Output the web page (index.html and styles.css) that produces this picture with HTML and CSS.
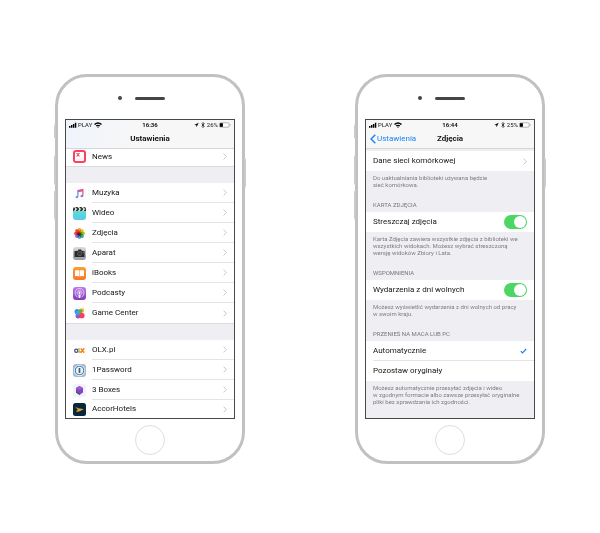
FILE: index.html
```html
<!DOCTYPE html>
<html lang="pl">
<head>
<meta charset="utf-8">
<meta name="viewport" content="width=device-width, initial-scale=1">
<title>Ustawienia</title>
<link rel="stylesheet" href="styles.css">
</head>
<body>
<svg class="defs" aria-hidden="true">
  <symbol id="signal" viewBox="0 0 9 6"><path d="M0 4h1.6v2H0zM2.2 3h1.6v3H2.2zM4.4 1.8H6V6H4.4zM6.6.5h1.6V6H6.6z"/></symbol>
  <symbol id="wifi" viewBox="0 0 8 6"><path d="M0 1.9Q4-1.5 8 1.9L7 3Q4 .6 1 3zM1.7 3.6Q4 1.7 6.3 3.6L5.3 4.6Q4 3.6 2.7 4.6zM3.2 5Q4 4.4 4.8 5L4 5.9z"/></symbol>
  <symbol id="location" viewBox="0 0 6 6"><path d="M.3 3.1 5.6.4 3 5.7 2.8 3.2z"/></symbol>
  <symbol id="bluetooth" viewBox="0 0 4 6"><path d="M.6 1.6 3.3 4.2 2 5.5V.5l1.3 1.3L.6 4.4" fill="none" stroke="currentColor" stroke-width=".7"/></symbol>
  <symbol id="battery" viewBox="0 0 12 6"><rect x=".5" y=".8" width="9.6" height="4.4" rx="1" fill="#fff" stroke="#888" stroke-width=".6"/><path d="M.9 1.2h3v3.6h-3z"/><path d="M10.8 2.2v1.6q.8-.2.8-.8t-.8-.8z" fill="#888"/></symbol>
  <symbol id="chevron" viewBox="0 0 4 7"><path d="M.6.6 3.4 3.5.6 6.4" fill="none" stroke="#c3c3c7" stroke-width=".9"/></symbol>
</svg>
<main class="stage">
  <section class="phone">
    <i class="key mute"></i><i class="key up"></i><i class="key down"></i><i class="key power"></i>
    <div class="earpiece"><i class="camera"></i><i class="speaker"></i></div>
    <div class="screen">
      <header class="bar tinted">
        <div class="status">
          <span class="carrier"><svg class="signal"><use href="#signal"/></svg>PLAY <svg class="wifi"><use href="#wifi"/></svg></span>
          <time>16:36</time>
          <span class="power-info"><svg class="location"><use href="#location"/></svg><svg class="bluetooth"><use href="#bluetooth"/></svg>26%<svg class="battery"><use href="#battery"/></svg></span>
        </div>
        <div class="title-row"><h1>Ustawienia</h1></div>
      </header>
      <nav class="list">
        <a class="item clipped" href="#"><svg class="app" viewBox="0 0 26 26"><rect width="26" height="26" rx="6" fill="#fa4263"/><rect x="4" y="4" width="18" height="18" rx="2" fill="#fff"/><path d="M6 6h2.500l5.500 7h-2.500zM11.500 6H14l-5.500 7H6z" fill="#f33c5c"/><path d="M15 16h5M7 18h12" stroke="#eed9df"/></svg><span class="name">News<svg class="chevron"><use href="#chevron"/></svg></span></a>
      </nav>
      <nav class="list spaced">
        <a class="item" href="#"><svg class="app" viewBox="0 0 26 26"><defs><linearGradient id="note" x1="0" y1="1" x2="1" y2="0"><stop stop-color="#44bdf4"/><stop offset=".45" stop-color="#9b70dd"/><stop offset="1" stop-color="#fc4a69"/></linearGradient></defs><rect x=".5" y=".5" width="25" height="25" rx="6" fill="#fff" stroke="#f2f2f4"/><path d="M8.500 6 21 3.500V17q0 3.500-3.500 3.500-2.700 0-2.700-2.200 0-2.300 3.700-2.900V9L11 10.500v8.700q0 3.300-3.500 3.300-2.700 0-2.700-2.200t3.700-2.900z" fill="url(#note)"/></svg><span class="name">Muzyka<svg class="chevron"><use href="#chevron"/></svg></span></a>
        <a class="item" href="#"><svg class="app" viewBox="0 0 26 26"><defs><linearGradient id="film" x1="0" y1="0" x2="0" y2="1"><stop stop-color="#5be0c7"/><stop offset="1" stop-color="#5ac5f4"/></linearGradient></defs><path d="M0 8h26v12q0 6-6 6H6q-6 0-6-6z" fill="url(#film)"/><path d="M0 8V4q0-4 4-4h18q4 0 4 4v4z" fill="#333"/><path d="m4 0 4 4-3 4H2l3-4-3-4zm8 0 4 4-3 4h-3l3-4-4-4zm8 0 4 4-3 4h-3l3-4-4-4z" fill="#fff"/></svg><span class="name">Wideo<svg class="chevron"><use href="#chevron"/></svg></span></a>
        <a class="item" href="#"><svg class="app" viewBox="0 0 26 26"><rect x=".5" y=".5" width="25" height="25" rx="6" fill="#fff" stroke="#f2f2f4"/><g class="petals"><rect x="9.500" y="2" width="7" height="11" rx="3.500" fill="#f9a12a"/><rect x="9.500" y="2" width="7" height="11" rx="3.500" fill="#e8cf25" transform="rotate(45 13 13)"/><rect x="9.500" y="2" width="7" height="11" rx="3.500" fill="#98c93c" transform="rotate(90 13 13)"/><rect x="9.500" y="2" width="7" height="11" rx="3.500" fill="#41b07a" transform="rotate(135 13 13)"/><rect x="9.500" y="2" width="7" height="11" rx="3.500" fill="#659bd5" transform="rotate(180 13 13)"/><rect x="9.500" y="2" width="7" height="11" rx="3.500" fill="#9475bd" transform="rotate(225 13 13)"/><rect x="9.500" y="2" width="7" height="11" rx="3.500" fill="#e04b7b" transform="rotate(270 13 13)"/><rect x="9.500" y="2" width="7" height="11" rx="3.500" fill="#ef5a3c" transform="rotate(315 13 13)"/></g></svg><span class="name">Zdjęcia<svg class="chevron"><use href="#chevron"/></svg></span></a>
        <a class="item" href="#"><svg class="app" viewBox="0 0 26 26"><defs><linearGradient id="metal" x1="0" y1="0" x2="0" y2="1"><stop stop-color="#dcdcde"/><stop offset="1" stop-color="#98989c"/></linearGradient></defs><rect width="26" height="26" rx="6" fill="url(#metal)"/><path d="M3 8h6l2-3h5l2 3h5v12H3z" fill="#28292b"/><circle cx="13.5" cy="13" r="4.3" fill="#38393b" stroke="#8b8c8e"/><circle cx="20.5" cy="10.5" r="1" fill="#bbb"/></svg><span class="name">Aparat<svg class="chevron"><use href="#chevron"/></svg></span></a>
        <a class="item" href="#"><svg class="app" viewBox="0 0 26 26"><defs><linearGradient id="book" x1="0" y1="0" x2="0" y2="1"><stop stop-color="#ff9d2d"/><stop offset="1" stop-color="#fb7529"/></linearGradient></defs><rect width="26" height="26" rx="6" fill="url(#book)"/><path d="M4 7q5-2.200 8.500 0v12Q9 17 4 18.500zM13.500 7Q17 4.800 22 7v11.500Q17 17 13.500 19z" fill="#fff"/></svg><span class="name">iBooks<svg class="chevron"><use href="#chevron"/></svg></span></a>
        <a class="item" href="#"><svg class="app" viewBox="0 0 26 26"><defs><linearGradient id="cast" x1="0" y1="0" x2="0" y2="1"><stop stop-color="#c17ae8"/><stop offset="1" stop-color="#8239be"/></linearGradient></defs><rect width="26" height="26" rx="6" fill="url(#cast)"/><g fill="none" stroke="#f3e6fb" stroke-width="1.500"><path d="M9 20A9 9 0 1 1 17 20"/><path d="M9.500 15.500a5 5 0 1 1 7 0"/></g><circle cx="13" cy="11.500" r="2.300" fill="#fff"/><path d="M10.500 15.500q2.500-1.600 5 0l-1 6.500h-3z" fill="#fff"/></svg><span class="name">Podcasty<svg class="chevron"><use href="#chevron"/></svg></span></a>
        <a class="item" href="#"><svg class="app" viewBox="0 0 26 26"><rect x=".5" y=".5" width="25" height="25" rx="6" fill="#fff" stroke="#f2f2f4"/><circle cx="18" cy="7" r="4.500" fill="#fbb42a"/><circle cx="8" cy="9" r="5" fill="#3b8ee8"/><circle cx="14.500" cy="8.500" r="4.300" fill="#55b84b"/><circle cx="10" cy="18" r="5" fill="#8a58cf"/><circle cx="9" cy="12.500" r="4.300" fill="#35a8de"/><circle cx="17.500" cy="17" r="5.700" fill="#f83e65"/></svg><span class="name">Game Center<svg class="chevron"><use href="#chevron"/></svg></span></a>
      </nav>
      <nav class="list spaced">
        <a class="item" href="#"><svg class="app" viewBox="0 0 26 26"><rect x=".5" y=".5" width="25" height="25" rx="6" fill="#fff" stroke="#f2f2f4"/><circle cx="6.500" cy="13.500" r="3.200" fill="none" stroke="#5a3c8e" stroke-width="2.400"/><path d="M12 8v8h4" fill="none" stroke="#9bc03b" stroke-width="2.600"/><path d="m15.500 9 7 8.500m0-9-7 9" stroke="#f58220" stroke-width="3"/></svg><span class="name">OLX.pl<svg class="chevron"><use href="#chevron"/></svg></span></a>
        <a class="item" href="#"><svg class="app" viewBox="0 0 26 26"><rect width="26" height="26" rx="6" fill="#b5b7ba"/><circle cx="13" cy="13" r="11" fill="#fff"/><circle cx="13" cy="13" r="8.500" fill="#f1f2f3" stroke="#258be6" stroke-width="2.400"/><rect x="11.300" y="8" width="3.400" height="10" rx="1" fill="#555a60"/></svg><span class="name">1Password<svg class="chevron"><use href="#chevron"/></svg></span></a>
        <a class="item" href="#"><svg class="app" viewBox="0 0 26 26"><rect width="26" height="26" rx="6" fill="#f1f2fa"/><path d="m13 4 7 4v9l-7 5-7-5V8z" fill="#8546c4"/><path d="m13 4 7 4-7 4-7-4z" fill="#a35bd5"/><path d="m6 14 7 4v4l-7-5z" fill="#50545a"/></svg><span class="name">3 Boxes<svg class="chevron"><use href="#chevron"/></svg></span></a>
        <a class="item cut" href="#"><svg class="app" viewBox="0 0 26 26"><rect width="26" height="26" rx="5" fill="#08273c"/><path d="m4.500 8 8 3.200q5 .8 9.500 1.300-4 1.300-7.500 3.500-5 2-9 1.800l4-2.300-3.500-.7 4-1.500z" fill="#eaa22e"/></svg><span class="name">AccorHotels<svg class="chevron"><use href="#chevron"/></svg></span></a>
      </nav>
    </div>
    <button class="home" aria-label="Home"></button>
  </section>

  <section class="phone">
    <i class="key mute"></i><i class="key up"></i><i class="key down"></i><i class="key power"></i>
    <div class="earpiece"><i class="camera"></i><i class="speaker"></i></div>
    <div class="screen">
      <header class="bar">
        <div class="status">
          <span class="carrier"><svg class="signal"><use href="#signal"/></svg>PLAY <svg class="wifi"><use href="#wifi"/></svg></span>
          <time>16:44</time>
          <span class="power-info"><svg class="location"><use href="#location"/></svg><svg class="bluetooth"><use href="#bluetooth"/></svg>25%<svg class="battery"><use href="#battery"/></svg></span>
        </div>
        <div class="title-row"><a class="back" href="#"><svg viewBox="0 0 6 10"><path d="M5.300.7 1 5l4.300 4.300" fill="none" stroke="currentColor" stroke-width="1.400"/></svg>Ustawienia</a><h1>Zdjęcia</h1></div>
      </header>
      <div class="group first">
        <a class="setting" href="#">Dane sieci komórkowej<svg class="chevron"><use href="#chevron"/></svg></a>
        <p class="note">Do uaktualniania biblioteki używana będzie<br>sieć komórkowa.</p>
      </div>
      <div class="group">
        <h2>KARTA ZDJĘCIA</h2>
        <label class="setting">Streszczaj zdjęcia<input class="switch" type="checkbox" checked></label>
        <p class="note">Karta Zdjęcia zawiera wszystkie zdjęcia z biblioteki we<br>wszystkich widokach. Możesz wybrać streszczoną<br>wersję widoków Zbiory i Lata.</p>
      </div>
      <div class="group">
        <h2>WSPOMNIENIA</h2>
        <label class="setting">Wydarzenia z dni wolnych<input class="switch" type="checkbox" checked></label>
        <p class="note">Możesz wyświetlić wydarzenia z dni wolnych od pracy<br>w swoim kraju.</p>
      </div>
      <div class="group">
        <h2>PRZENIEŚ NA MACA LUB PC</h2>
        <button class="setting divided">Automatycznie<svg class="check" viewBox="0 0 7 6"><path d="m.8 3.200 1.700 1.700L6.200 1" fill="none" stroke="#1b82f5" stroke-width="1.200"/></svg></button>
        <button class="setting">Pozostaw oryginały</button>
        <p class="note">Możesz automatycznie przesyłać zdjęcia i wideo<br>w zgodnym formacie albo zawsze przesyłać oryginalne<br>pliki bez sprawdzania ich zgodności.</p>
      </div>
    </div>
    <button class="home" aria-label="Home"></button>
  </section>
</main>
</body>
</html>
```
FILE: styles.css
```css
* { box-sizing: border-box; }

body {
  margin: 0;
  background: #fff;
  color: #161618;
  font-family: Roboto, "Liberation Sans", sans-serif;
  font-size: 8px;
  line-height: 10px;
}

a { color: inherit; text-decoration: none; }
h1, h2, p { margin: 0; font-weight: 400; }
button { font: inherit; color: inherit; border: 0; padding: 0; margin: 0; text-align: left; }
svg { display: block; flex: none; }
.defs { position: absolute; width: 0; height: 0; }

.stage {
  display: grid;
  grid-template-columns: repeat(auto-fit, minmax(200px, 1fr));
  justify-items: center;
  align-items: start;
  row-gap: 40px;
  padding: 74px 0 60px;
}

.phone {
  position: relative;
  display: flex;
  flex-direction: column;
  width: 100%;
  max-width: 190px;
  padding: 0 7px;
  border: 3px solid #c1c1c2;
  border-radius: 32px;
  background: #fff;
}

.key {
  position: absolute;
  left: -4px;
  width: 2px;
  height: 30px;
  border-radius: 2px 0 0 2px;
  background: #c9c9ca;
}
.mute { top: 47px; height: 15px; }
.up { top: 78px; }
.down { top: 113px; }
.power { top: 81px; left: auto; right: -4px; border-radius: 0 2px 2px 0; }

.earpiece {
  display: grid;
  grid-template-columns: 1fr 30px 1fr;
  align-items: center;
  height: 42px;
}
.camera { justify-self: end; width: 4px; height: 4px; margin-right: 13px; border-radius: 50%; background: #454547; }
.speaker { height: 3px; border-radius: 2px; background: #454547; }

.screen { border: 1px solid #48484a; background: #eeeef3; }

.bar { background: #f7f7f8; border-bottom: 1px solid #d5d5d9; }
.tinted { background: linear-gradient(100deg, #f0f4fb, #f7f7f8 40%); }

.status {
  display: grid;
  grid-template-columns: 1fr auto 1fr;
  align-items: center;
  padding: 0 3px;
  font-size: 6px;
}
.status time { font-weight: 700; }
.carrier, .power-info { display: flex; align-items: center; gap: 1px; }
.power-info { justify-content: flex-end; }
.signal { width: 8px; height: 6px; }
.wifi { width: 8px; height: 6px; margin-left: 1px; }
.location { width: 5px; height: 6px; }
.bluetooth { width: 4px; height: 6px; margin: 0 1px; }
.battery { width: 12px; height: 6px; }

.title-row {
  display: grid;
  grid-template-columns: minmax(0, 1fr) auto minmax(0, 1fr);
  align-items: center;
  height: 18px;
  padding: 0 4px;
}
.title-row h1 { grid-column: 2; font-size: 8px; font-weight: 700; }
.back { display: flex; align-items: center; gap: 1px; color: #1b82f5; }
.back svg { width: 6px; height: 10px; }

.list { background: #fff; border-bottom: 1px solid #dcdce0; }
.spaced { margin-top: 16px; }
.spaced:last-child { border-bottom: 0; }
.item { display: flex; align-items: center; gap: 6px; height: 20px; padding-left: 7px; }
.item.clipped { height: 17px; padding-bottom: 2px; }
.item.cut { height: 18px; }
.app { width: 13px; height: 13px; }
.name {
  display: flex;
  align-items: center;
  justify-content: space-between;
  flex: 1;
  align-self: stretch;
  padding-right: 7px;
  border-bottom: 1px solid #e4e4e7;
}
.item:last-child .name { border-bottom: 0; }
.chevron { width: 4px; height: 7px; }

.group { padding-bottom: 12px; }
.group.first { padding-top: 2px; }
.group:last-child { padding-bottom: 13px; }
.group h2 { padding: 0 7px 2px; font-size: 6px; line-height: 10px; color: #77777c; }
.setting {
  display: flex;
  align-items: center;
  justify-content: space-between;
  width: 100%;
  height: 20px;
  padding: 0 7px;
  background: #fff;
}
.divided { background: linear-gradient(#e4e4e7, #e4e4e7) 7px 100% / 100% 1px no-repeat #fff; }
.note { padding: 3px 7px 0; font-size: 6px; line-height: 7px; color: #7d7d82; }
.check { width: 7px; height: 6px; }
.petals rect { mix-blend-mode: multiply; }

.switch {
  appearance: none;
  display: flex;
  justify-content: flex-end;
  width: 23px;
  height: 14px;
  margin: 0;
  padding: 1px;
  border-radius: 7px;
  background: #4cd663;
}
.switch::before { content: ""; width: 12px; height: 12px; border-radius: 50%; background: #fff; }
.switch:not(:checked) { justify-content: flex-start; background: #dcdce0; }

.home {
  align-self: center;
  width: 30px;
  height: 30px;
  margin: 6px 0;
  border: 1px solid #dedee0;
  border-radius: 50%;
  background: #fff;
}
```
